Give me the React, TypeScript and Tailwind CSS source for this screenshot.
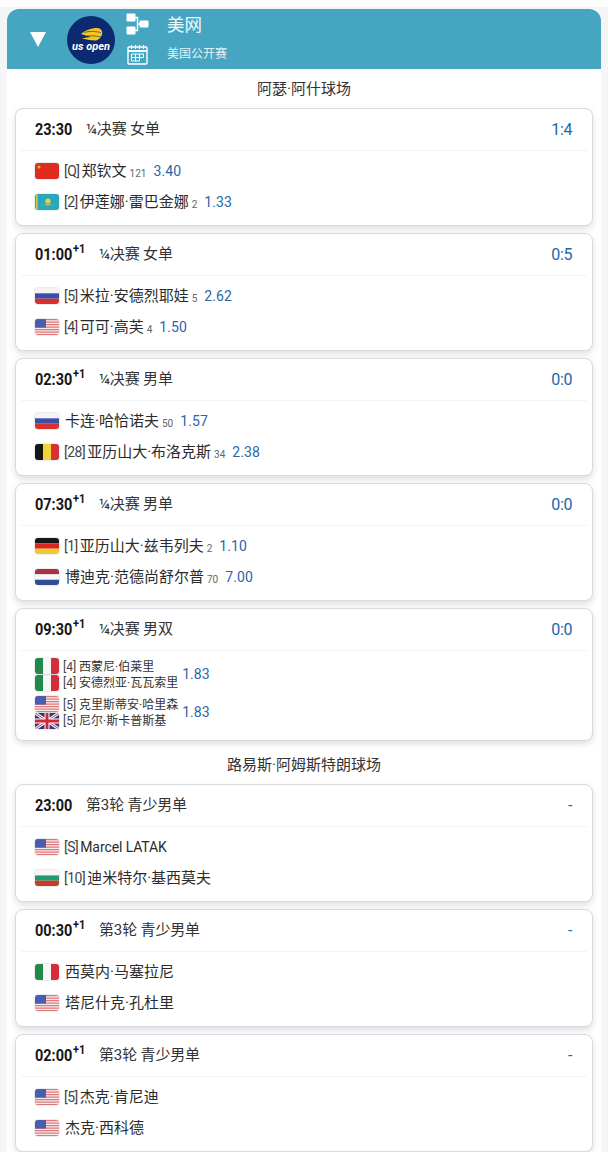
import React from "react";

const sans = { fontFamily: '"Roboto","Noto Sans CJK SC",sans-serif' };

function Flag({ code, nudge }: { code: string; nudge?: boolean }) {
  const inner: Record<string, React.ReactNode> = {
    cn: (
      <>
        <rect width="24" height="16" fill="#de2b1f" />
        <circle cx="4" cy="4" r="1.6" fill="#f0a83a" />
      </>
    ),
    kz: (
      <>
        <rect width="24" height="16" fill="#2aa9bd" />
        <rect x="1" width="1.6" height="16" fill="#d8c84a" />
        <circle cx="13" cy="7" r="2.6" fill="#e8d24a" />
        <path d="M8.5 9.5q4.5 4 9 0q-4.5 2-9 0z" fill="#e8d24a" />
      </>
    ),
    ru: (
      <>
        <rect width="24" height="5.3" fill="#f4f4f6" />
        <rect y="5.3" width="24" height="5.4" fill="#3b4fa8" />
        <rect y="10.7" width="24" height="5.3" fill="#d8302c" />
      </>
    ),
    us: (
      <>
        <rect width="24" height="16" fill="#f7ecec" />
        {[0, 2.5, 5, 7.5, 10, 12.5, 15].map((y) => (
          <rect key={y} y={y} width="24" height="1.25" fill="#e0777b" />
        ))}
        <rect width="11" height="8.6" fill="#4a5eb0" />
      </>
    ),
    be: (
      <>
        <rect width="8" height="16" fill="#161616" />
        <rect x="8" width="8" height="16" fill="#f3d23a" />
        <rect x="16" width="8" height="16" fill="#d8303a" />
      </>
    ),
    de: (
      <>
        <rect width="24" height="5.4" fill="#161616" />
        <rect y="5.4" width="24" height="5.3" fill="#d8261f" />
        <rect y="10.7" width="24" height="5.3" fill="#f3c92f" />
      </>
    ),
    nl: (
      <>
        <rect width="24" height="5.4" fill="#a83040" />
        <rect y="5.4" width="24" height="5.3" fill="#f6f6f6" />
        <rect y="10.7" width="24" height="5.3" fill="#2f4f92" />
      </>
    ),
    it: (
      <>
        <rect width="8" height="16" fill="#1f8a4a" />
        <rect x="8" width="8" height="16" fill="#f7f7f7" />
        <rect x="16" width="8" height="16" fill="#d42e3c" />
      </>
    ),
    gb: (
      <>
        <rect width="24" height="16" fill="#2b3a7e" />
        <path d="M0 0L24 16M24 0L0 16" stroke="#fff" strokeWidth="3" />
        <path d="M0 0L24 16M24 0L0 16" stroke="#d0283a" strokeWidth="1" />
        <path d="M12 0V16M0 8H24" stroke="#fff" strokeWidth="5" />
        <path d="M12 0V16M0 8H24" stroke="#d0283a" strokeWidth="3" />
      </>
    ),
    bg: (
      <>
        <rect width="24" height="5.4" fill="#f6f6f6" />
        <rect y="5.4" width="24" height="5.3" fill="#1f9a6a" />
        <rect y="10.7" width="24" height="5.3" fill="#c93a2c" />
      </>
    ),
  };
  return (
    <svg
      viewBox="0 0 24 16"
      className={`w-6 h-4 shrink-0 rounded-[3px] shadow-[0_0_1.5px_rgba(0,0,0,0.4)] ${nudge ? "-mt-[2px]" : ""}`}
    >
      {inner[code]}
    </svg>
  );
}

function Logo() {
  return (
    <svg viewBox="0 0 48 48" className="w-12 h-12 shrink-0 mt-[2px]">
      <circle cx="24" cy="24" r="24" fill="#0c2a6f" />
      <path d="M14 18C18 14.500 24 12 30 12C34 12 36 15 35 18.500C34 22 31 24.500 28 24.500C24 24.500 20 23.500 15 22.500C18 21.500 21 21 24 21C21 20 17 19 14 18Z" fill="#f7c51e" />
      <path d="M17 16.500C22 15 27 15 34 16.500M20 20C25 19.500 29 20 34 21" stroke="#0c2a6f" strokeWidth="0.6" fill="none" />
      <text x="24" y="34" textAnchor="middle" fill="#fff" fontSize="11" fontWeight="700" fontStyle="italic" fontFamily="Roboto, sans-serif">us open</text>
    </svg>
  );
}

function BracketIcon() {
  return (
    <svg viewBox="0 0 23 22" className="w-[23px] h-[22px]">
      <rect x="0.500" y="0.500" width="9" height="8" rx="1" fill="#fff" />
      <rect x="0.500" y="13.500" width="9" height="8" rx="1" fill="#fff" />
      <rect x="13.500" y="7.500" width="9" height="7" rx="1" fill="#fff" />
      <path d="M9 4.500H11.500V17.500H9M11.500 11H14" stroke="#fff" strokeWidth="1.400" fill="none" />
    </svg>
  );
}

function CalendarIcon() {
  return (
    <svg viewBox="0 0 21 21" className="w-[21px] h-[21px]">
      <rect x="1" y="3" width="19" height="17" rx="1" fill="none" stroke="#fff" strokeWidth="1.400" />
      <path d="M1 7H20" stroke="#fff" strokeWidth="2" />
      <path d="M4.500 1V5M8.500 1V5M12.500 1V5M16.500 1V5" stroke="#fff" strokeWidth="1.200" />
      <path d="M4.500 10H16.500V13.500H4.500ZM8.500 10V17M12.500 10V17M4.500 13.500V17H12.500" stroke="#fff" strokeWidth="1" fill="none" />
    </svg>
  );
}

type Row = { flag: string; seed?: string; name: string; latin?: boolean; rank?: string; odds?: string };
type Match = { time: string; plus?: boolean; round: string; score: string; rows: Row[] };

function Header({ time, plus, round, score }: Omit<Match, "rows">) {
  return (
    <div className="h-[42px] mx-[5px] pl-[14px] pr-[15px] flex items-center justify-between border-b border-[#f2f3f5]">
      <div className="flex items-center">
        <div className={plus ? "w-[64px]" : "w-[51px]"}>
          <span className="inline-block origin-left scale-x-[0.85] text-[17px] font-bold text-[#161616] leading-none whitespace-nowrap">
            {time}
            {plus && <sup className="text-[13px] font-bold ml-[1px] leading-none">+1</sup>}
          </span>
        </div>
        <span className="text-[15px] text-[#333] tracking-[-0.15px]">{round}</span>
      </div>
      <span className="text-[16px] text-[#2166ad] tracking-[-0.4px]">{score}</span>
    </div>
  );
}

function PlayerRow({ flag, seed, name, latin, rank, odds }: Row) {
  return (
    <div className="h-[31px] flex items-center">
      <Flag code={flag} nudge />
      {seed ? (
        <span className="ml-[5px] mr-[2px] text-[14px] text-[#444] tracking-[-0.5px]">{seed}</span>
      ) : (
        <span className="w-[6px]" />
      )}
      <span className={latin ? "text-[14px] text-[#2b2b2b] tracking-[-0.1px]" : "text-[15px] text-[#2b2b2b]"}>{name}</span>
      {rank && <span className="ml-[3px] mt-[3px] text-[10px] text-[#666]">{rank}</span>}
      {odds && <span className="ml-[7px] text-[14px] text-[#2a66a8] tracking-[0.1px]">{odds}</span>}
    </div>
  );
}

const cardShadow = "rounded-[8px] bg-white border border-[#d7dade] shadow-[0_3px_6px_rgba(140,148,160,0.3)] overflow-hidden";

function Card({ time, plus, round, score, rows }: Match) {
  return (
    <div className={`h-[118px] ${cardShadow}`}>
      <Header time={time} plus={plus} round={round} score={score} />
      <div className="pl-[19px] pt-[5px]">
        {rows.map((r, i) => (
          <PlayerRow key={i} {...r} />
        ))}
      </div>
    </div>
  );
}

function Pair({ a, b, odds }: { a: [string, string, string]; b: [string, string, string]; odds: string }) {
  return (
    <div className="flex items-center h-[33px]">
      <div className="flex flex-col gap-[1px]">
        <Flag code={a[0]} />
        <Flag code={b[0]} />
      </div>
      <div className="ml-[4px] flex flex-col text-[12px] text-[#333] leading-[16px]">
        <span>
          <span className="mr-[3px] text-[12px] text-[#444]">{a[1]}</span>
          {a[2]}
        </span>
        <span>
          <span className="mr-[3px] text-[12px] text-[#444]">{b[1]}</span>
          {b[2]}
        </span>
      </div>
      <span className="ml-[4px] text-[14px] text-[#2a66a8]">{odds}</span>
    </div>
  );
}

const ashe: Match[] = [
  { time: "23:30", round: "¼决赛 女单", score: "1:4", rows: [
    { flag: "cn", seed: "[Q]", name: "郑钦文", rank: "121", odds: "3.40" },
    { flag: "kz", seed: "[2]", name: "伊莲娜·雷巴金娜", rank: "2", odds: "1.33" },
  ] },
  { time: "01:00", plus: true, round: "¼决赛 女单", score: "0:5", rows: [
    { flag: "ru", seed: "[5]", name: "米拉·安德烈耶娃", rank: "5", odds: "2.62" },
    { flag: "us", seed: "[4]", name: "可可·高芙", rank: "4", odds: "1.50" },
  ] },
  { time: "02:30", plus: true, round: "¼决赛 男单", score: "0:0", rows: [
    { flag: "ru", name: "卡连·哈恰诺夫", rank: "50", odds: "1.57" },
    { flag: "be", seed: "[28]", name: "亚历山大·布洛克斯", rank: "34", odds: "2.38" },
  ] },
  { time: "07:30", plus: true, round: "¼决赛 男单", score: "0:0", rows: [
    { flag: "de", seed: "[1]", name: "亚历山大·兹韦列夫", rank: "2", odds: "1.10" },
    { flag: "nl", name: "博迪克·范德尚舒尔普", rank: "70", odds: "7.00" },
  ] },
];

const armstrong: Match[] = [
  { time: "23:00", round: "第3轮 青少男单", score: "-", rows: [
    { flag: "us", seed: "[S]", name: "Marcel LATAK", latin: true },
    { flag: "bg", seed: "[10]", name: "迪米特尔·基西莫夫" },
  ] },
  { time: "00:30", plus: true, round: "第3轮 青少男单", score: "-", rows: [
    { flag: "it", name: "西莫内·马塞拉尼" },
    { flag: "us", name: "塔尼什克·孔杜里" },
  ] },
  { time: "02:00", plus: true, round: "第3轮 青少男单", score: "-", rows: [
    { flag: "us", seed: "[5]", name: "杰克·肯尼迪" },
    { flag: "us", name: "杰克·西科德" },
  ] },
];

export default function App() {
  return (
    <div className="w-[608px] h-[1152px] overflow-hidden bg-[#f3f5f6]" style={sans}>
      <div className="h-[7px] bg-[#fdfdfd]" />
      <div className="pt-[2px] px-[7px]">
        <div className="w-[594px] bg-white rounded-t-[12px]">
          <div className="h-[60px] bg-[#46a5c1] rounded-t-[12px] flex items-center text-white">
            <svg viewBox="0 0 16 15" className="ml-[23px] w-4 h-[15px]">
              <path d="M0 0H16L8 15Z" fill="#fff" />
            </svg>
            <div className="ml-[21px]">
              <Logo />
            </div>
            <div className="ml-[11px] flex flex-col items-center gap-[9px]">
              <BracketIcon />
              <CalendarIcon />
            </div>
            <div className="ml-[18px] self-start pt-[4px] flex flex-col">
              <span className="text-[17.500px] leading-[24px] text-[#eef8fb]">美网</span>
              <span className="mt-[9px] text-[12px] leading-[16px] text-[#e2f3f7]">美国公开赛</span>
            </div>
          </div>
          <div className="h-[39px] pt-[2px] flex items-center justify-center text-[15px] text-[#333]">阿瑟·阿什球场</div>
          <div className="px-[8px] flex flex-col gap-[7px]">
            {ashe.map((m, i) => (
              <Card key={i} {...m} />
            ))}
            <div className={`h-[133px] ${cardShadow}`}>
              <Header time="09:30" plus round="¼决赛 男双" score="0:0" />
              <div className="pl-[19px] pt-[7px] flex flex-col gap-[5px]">
                <Pair a={["it", "[4]", "西蒙尼·伯莱里"]} b={["it", "[4]", "安德烈亚·瓦瓦索里"]} odds="1.83" />
                <Pair a={["us", "[5]", "克里斯蒂安·哈里森"]} b={["gb", "[5]", "尼尔·斯卡普斯基"]} odds="1.83" />
              </div>
            </div>
          </div>
          <div className="h-[43px] pt-[6px] flex items-center justify-center text-[15px] text-[#333]">路易斯·阿姆斯特朗球场</div>
          <div className="px-[8px] flex flex-col gap-[7px]">
            {armstrong.map((m, i) => (
              <Card key={i} {...m} />
            ))}
          </div>
        </div>
      </div>
    </div>
  );
}
